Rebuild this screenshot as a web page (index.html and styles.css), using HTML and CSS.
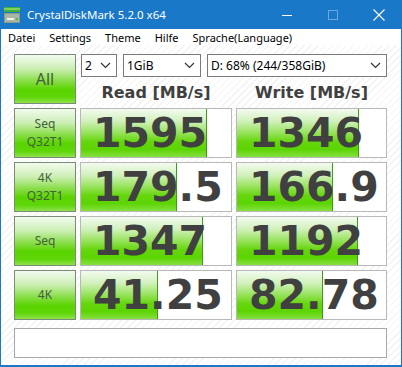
FILE: index.html
```html
<!DOCTYPE html>
<html lang="de">
<head>
  <meta charset="UTF-8">
  <title>CrystalDiskMark 5.2.0 x64</title>
  <link rel="stylesheet" href="styles.css">
</head>
<body>
  <div class="window">
    <!-- Titelleiste -->
    <div class="title-bar">
      <svg class="app-icon" width="16" height="16" viewBox="0 0 16 16">
        <rect x="0" y="0" width="16" height="5" fill="#3fae3a"/>
        <rect x="0" y="1" width="16" height="2" fill="#7fd35a"/>
        <rect x="0" y="6" width="16" height="10" fill="#8c9a88"/>
        <rect x="1" y="7" width="14" height="8" fill="#a9b5a5"/>
        <rect x="3" y="11" width="7" height="2" fill="#eef2ec"/>
        <rect x="12" y="11" width="2" height="2" fill="#47c23a"/>
      </svg>
      <span class="title">CrystalDiskMark 5.2.0 x64</span>
      <div class="caption-btns">
        <span class="cap-btn">
          <svg width="10" height="10" viewBox="0 0 10 10"><line x1="0" y1="5.5" x2="10" y2="5.5" stroke="#fff" stroke-width="1"/></svg>
        </span>
        <span class="cap-btn">
          <svg width="10" height="10" viewBox="0 0 10 10"><rect x="0.5" y="0.5" width="9" height="9" fill="none" stroke="#6fa6dc" stroke-width="1"/></svg>
        </span>
        <span class="cap-btn">
          <svg width="12" height="12" viewBox="0 0 12 12"><path d="M0.5 0.5 L11.5 11.5 M11.5 0.5 L0.5 11.5" stroke="#fff" stroke-width="1.1"/></svg>
        </span>
      </div>
    </div>

    <!-- Menü -->
    <div class="menu-bar">
      <span class="menu-item">Datei</span>
      <span class="menu-item">Settings</span>
      <span class="menu-item">Theme</span>
      <span class="menu-item">Hilfe</span>
      <span class="menu-item">Sprache(Language)</span>
    </div>

    <div class="content">
      <div class="bench">
        <div class="test-btn all-btn">All</div>

        <div class="selects">
          <div class="select sel-count">
            <span>2</span>
            <svg class="chev" width="11" height="7" viewBox="0 0 11 7"><polyline points="1,1 5.5,5.5 10,1" fill="none" stroke="#333" stroke-width="1.2"/></svg>
          </div>
          <div class="select sel-size">
            <span>1GiB</span>
            <svg class="chev" width="11" height="7" viewBox="0 0 11 7"><polyline points="1,1 5.5,5.5 10,1" fill="none" stroke="#333" stroke-width="1.2"/></svg>
          </div>
          <div class="select sel-drive">
            <span>D: 68% (244/358GiB)</span>
            <svg class="chev" width="11" height="7" viewBox="0 0 11 7"><polyline points="1,1 5.5,5.5 10,1" fill="none" stroke="#333" stroke-width="1.2"/></svg>
          </div>
        </div>

        <div class="col-head">Read [MB/s]</div>
        <div class="col-head">Write [MB/s]</div>

        <!-- Seq Q32T1 -->
        <div class="test-btn">Seq<br>Q32T1</div>
        <div class="result"><div class="bar" style="width: 126px"></div><span class="value">1595</span></div>
        <div class="result"><div class="bar" style="width: 122px"></div><span class="value">1346</span></div>

        <!-- 4K Q32T1 -->
        <div class="test-btn">4K<br>Q32T1</div>
        <div class="result"><div class="bar" style="width: 96px"></div><span class="value">179.5</span></div>
        <div class="result"><div class="bar" style="width: 96px"></div><span class="value">166.9</span></div>

        <!-- Seq -->
        <div class="test-btn">Seq</div>
        <div class="result"><div class="bar" style="width: 122px"></div><span class="value">1347</span></div>
        <div class="result"><div class="bar" style="width: 121px"></div><span class="value">1192</span></div>

        <!-- 4K -->
        <div class="test-btn">4K</div>
        <div class="result"><div class="bar" style="width: 77px"></div><span class="value">41.25</span></div>
        <div class="result"><div class="bar" style="width: 86px"></div><span class="value">82.78</span></div>

        <!-- Kommentar -->
        <div class="comment"></div>
      </div>
    </div>
  </div>
</body>
</html>
```

FILE: styles.css
```css
body {
    margin: 0;
    font-family: "Noto Sans", "Open Sans", sans-serif;
}
.window {
    width: 402px;
    height: 367px;
    box-sizing: border-box;
    border: 1px solid #1a78c8;
    border-top: none;
    border-bottom-width: 2px;
    display: flex;
    flex-direction: column;
    background-color: #fff;
}

/* Titelleiste */
.title-bar {
    height: 29px;
    margin: 0 -1px;
    padding-left: 4px;
    background: #1a78c8;
    display: flex;
    align-items: center;
    color: #fff;
}
.app-icon {
    margin-right: 7px;
}
.title {
    font-size: 11.5px;
    flex: 1;
}
.caption-btns {
    display: flex;
    height: 100%;
}
.cap-btn {
    width: 46px;
    display: flex;
    align-items: center;
    justify-content: center;
}

/* Menü */
.menu-bar {
    height: 16px;
    display: flex;
    align-items: center;
    font-size: 11px;
    color: #000;
    background: #fff;
}
.menu-item {
    padding: 0 7px;
}

/* Inhalt mit Schraffur */
.content {
    flex: 1;
    padding: 9px 0 0 13px;
    background-color: #fff;
    background-image: repeating-linear-gradient(-45deg, #fff 0px, #fff 4px, #f3f3f3 4px, #f3f3f3 5px);
}
.bench {
    display: grid;
    grid-template-columns: 62px 152px 151px;
    grid-template-rows: 23px 23px 50px 50px 50px 50px 30px;
    gap: 4px;
}

.test-btn {
    box-sizing: border-box;
    border: 1px solid #7c8a78;
    background: linear-gradient(#f2fbee 0%, #cdefb6 28%, #8ddf50 52%, #5ad400 72%, #5fd60a 88%, #8ee24c 100%);
    color: #44603a;
    font-size: 12px;
    line-height: 18px;
    display: flex;
    align-items: center;
    justify-content: center;
    text-align: center;
}
.all-btn {
    grid-row: 1 / 3;
    font-size: 16px;
}

/* Auswahlfelder */
.selects {
    grid-column: 2 / 4;
    display: flex;
    gap: 6px;
    padding-left: 1px;
}
.select {
    box-sizing: border-box;
    height: 23px;
    border: 1px solid #7a7a7a;
    background: #fff;
    display: flex;
    align-items: center;
    justify-content: space-between;
    padding: 0 5px 0 3px;
    font-size: 12px;
    color: #000;
}
.sel-count {
    width: 36px;
}
.sel-size {
    width: 78px;
}
.sel-drive {
    flex: 1;
}

.col-head {
    font-family: "DejaVu Sans", Verdana, sans-serif;
    font-weight: bold;
    font-size: 16px;
    color: #404040;
    text-align: center;
    line-height: 23px;
}

/* Ergebnisfelder */
.result {
    position: relative;
    box-sizing: border-box;
    border: 1px solid #b8b8b8;
    background: #fff;
    overflow: hidden;
}
.bar {
    position: absolute;
    left: 0;
    top: 0;
    bottom: 0;
    box-sizing: border-box;
    border-right: 1px solid #3f9a1c;
    background: linear-gradient(#f4fbf0 0%, #d2f1bd 25%, #9be462 48%, #66d60e 68%, #5cd402 84%, #86e042 100%);
}
.value {
    position: relative;
    display: block;
    padding-left: 12px;
    font-family: "DejaVu Sans", Verdana, sans-serif;
    font-weight: bold;
    font-size: 41px;
    line-height: 48px;
    color: #404040;
}

.comment {
    grid-column: 1 / 4;
    margin-top: 4px;
    height: 30px;
    box-sizing: border-box;
    border: 1px solid #a8a8a8;
    background: #fff;
}
```
